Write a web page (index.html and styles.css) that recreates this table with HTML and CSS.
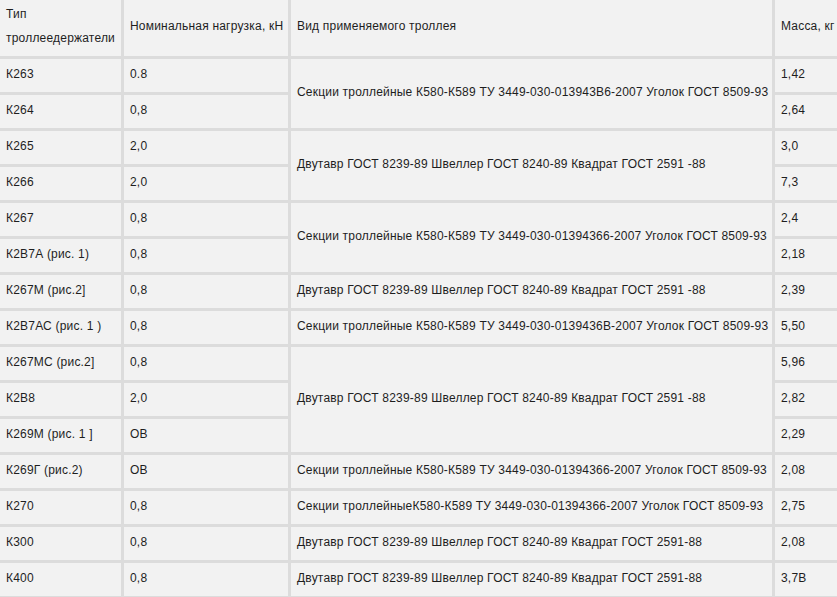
FILE: index.html
```html
<!DOCTYPE html>
<html>
<head>
<meta charset="utf-8">
<link rel="stylesheet" href="styles.css">
</head>
<body>
<table class="grid">
  <colgroup>
    <col class="c-type">
    <col class="c-load">
    <col class="c-kind">
    <col class="c-mass">
  </colgroup>
  <tr class="head">
    <td>Тип троллеедержатели</td>
    <td>Номинальная нагрузка, кН</td>
    <td>Вид применяемого троллея</td>
    <td>Масса, кг</td>
  </tr>
  <tr><td>К263</td><td>0.8</td><td rowspan="2">Секции троллейные К580-К589 ТУ 3449-030-013943В6-2007 Уголок ГОСТ 8509-93</td><td>1,42</td></tr>
  <tr><td>К264</td><td>0,8</td><td>2,64</td></tr>
  <tr><td>К265</td><td>2,0</td><td rowspan="2">Двутавр ГОСТ 8239-89 Швеллер ГОСТ 8240-89 Квадрат ГОСТ 2591 -88</td><td>3,0</td></tr>
  <tr><td>К266</td><td>2,0</td><td>7,3</td></tr>
  <tr><td>К267</td><td>0,8</td><td rowspan="2">Секции троллейные К580-К589 ТУ 3449-030-01394366-2007 Уголок ГОСТ 8509-93</td><td>2,4</td></tr>
  <tr><td>К2В7А (рис. 1)</td><td>0,8</td><td>2,18</td></tr>
  <tr><td>К267М (рис.2]</td><td>0,8</td><td>Двутавр ГОСТ 8239-89 Швеллер ГОСТ 8240-89 Квадрат ГОСТ 2591 -88</td><td>2,39</td></tr>
  <tr><td>К2В7АС (рис. 1 )</td><td>0,8</td><td>Секции троллейные К580-К589 ТУ 3449-030-0139436В-2007 Уголок ГОСТ 8509-93</td><td>5,50</td></tr>
  <tr><td>К267МС (рис.2]</td><td>0,8</td><td rowspan="3">Двутавр ГОСТ 8239-89 Швеллер ГОСТ 8240-89 Квадрат ГОСТ 2591 -88</td><td>5,96</td></tr>
  <tr><td>К2В8</td><td>2,0</td><td>2,82</td></tr>
  <tr><td>К269М (рис. 1 ]</td><td>ОВ</td><td>2,29</td></tr>
  <tr><td>К269Г (рис.2)</td><td>ОВ</td><td>Секции троллейные К580-К589 ТУ 3449-030-01394366-2007 Уголок ГОСТ 8509-93</td><td>2,08</td></tr>
  <tr><td>К270</td><td>0,8</td><td>Секции троллейныеК580-К589 ТУ 3449-030-01394366-2007 Уголок ГОСТ 8509-93</td><td>2,75</td></tr>
  <tr><td>К300</td><td>0,8</td><td>Двутавр ГОСТ 8239-89 Швеллер ГОСТ 8240-89 Квадрат ГОСТ 2591-88</td><td>2,08</td></tr>
  <tr><td>К400</td><td>0,8</td><td>Двутавр ГОСТ 8239-89 Швеллер ГОСТ 8240-89 Квадрат ГОСТ 2591-88</td><td>3,7В</td></tr>
</table>
</body>
</html>
```
FILE: styles.css
```css
html, body {
  margin: 0;
  padding: 0;
  overflow: hidden;
  background: #f2f2f2;
}
.grid {
  margin: -3px 0 0 -3px;
  border-collapse: separate;
  border-spacing: 3px;
  background: #dcdcdc;
  table-layout: fixed;
  width: 849px;
  font-family: "Liberation Sans", Arial, sans-serif;
  font-size: 12px;
  letter-spacing: 0.2px;
  color: #1e1e1e;
}
.c-type { width: 121px; }
.c-load { width: 164px; }
.c-kind { width: 481px; }
.c-mass { width: 68px; }
.grid td {
  background: #f2f2f2;
  padding: 0 4px 4px 6px;
  line-height: 24px;
  vertical-align: middle;
  text-align: left;
  white-space: nowrap;
  overflow: hidden;
}
.grid tr { height: 33px; }
.grid tr.head { height: 56px; }
.grid tr.head td { white-space: normal; padding-top: 2px; padding-bottom: 6px; }
```
